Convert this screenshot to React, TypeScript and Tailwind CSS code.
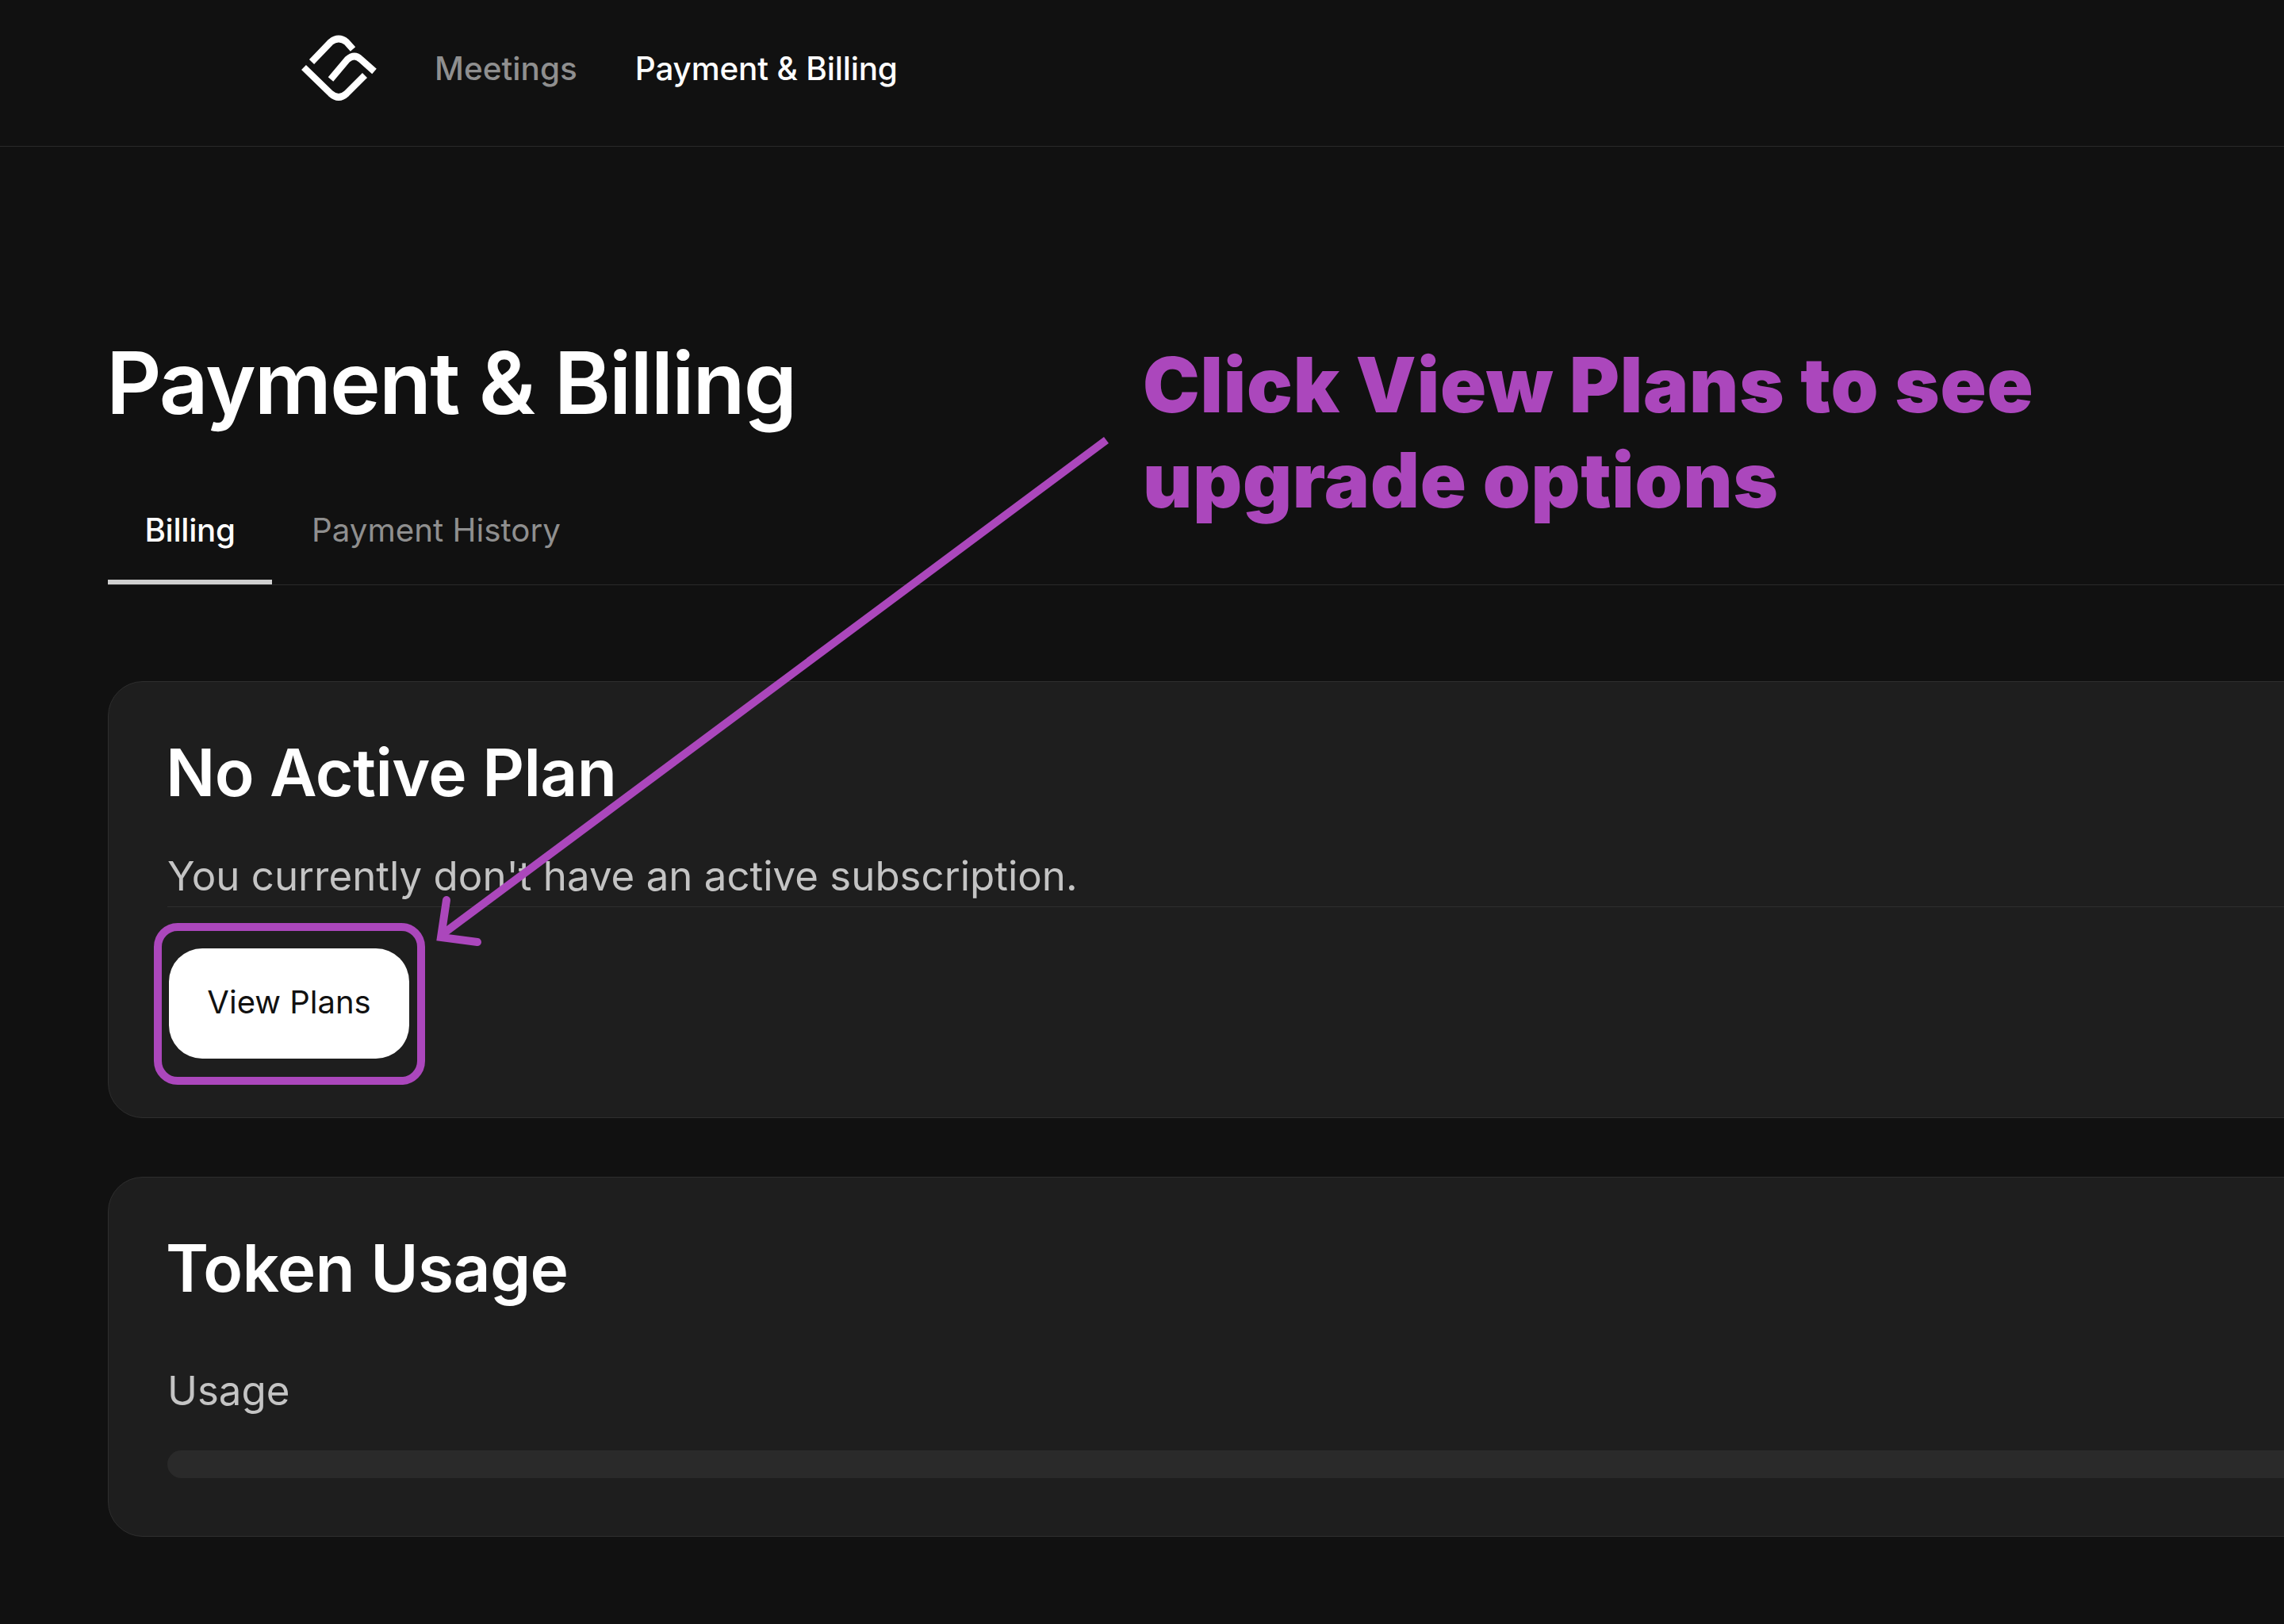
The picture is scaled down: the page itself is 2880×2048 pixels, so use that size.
const INTER = "font-['Inter',sans-serif]";

function Logo() {
  return (
    <svg viewBox="0 0 130 110" className="w-[130px] h-[110px]" fill="none" stroke="#ffffff" strokeWidth="8.5">
      <path d="M23 55 L57 88 Q67 97 77 88 L100 65" />
      <path d="M33 48 L57 23 Q67 15 77 23 L85 32" />
      <path d="M57 70 L78 45 Q87 37 95 45 L112 60" />
    </svg>
  );
}

function Annotations() {
  return (
    <>
      <div className="absolute left-[1441px] top-[425px] text-[96px] leading-[120px] font-black tracking-[0.8px] text-[#ab47bc] whitespace-nowrap">
        Click View Plans to see
        <br />
        upgrade options
      </div>
      <svg className="absolute left-0 top-0 w-[2880px] h-[2048px] pointer-events-none" viewBox="0 0 2880 2048" fill="none" stroke="#ab47bc" strokeWidth="10">
        <path d="M1395 555 L558 1178" />
        <path d="M563 1135 L556 1182 L602 1188" strokeLinecap="round" />
      </svg>
      <div className="absolute left-[194px] top-[1164px] w-[342px] h-[204px] border-[10px] border-[#ab47bc] rounded-[30px]" />
    </>
  );
}

export default function App() {
  return (
    <div className={`relative w-[2880px] h-[2048px] overflow-hidden bg-[#111111] text-white ${INTER}`}>
      <header className="h-[185px] border-b border-[#2a2a2a] pl-[360px] flex items-center pb-[14px]">
        <Logo />
        <nav className="ml-[58px] mt-[3px] flex items-center gap-[73px] text-[40.5px] leading-[60px] font-medium">
          <span className="text-[#8f8f8f]">Meetings</span>
          <span className="text-white tracking-[-0.2px]">Payment &amp; Billing</span>
        </nav>
      </header>

      <main className="w-[3200px] pl-[136px] pt-[238px]">
        <h1 className="text-[108px] leading-[120px] font-semibold tracking-[-1.9px] -ml-[2px]">Payment &amp; Billing</h1>

        <div className="mt-[94px] flex border-b border-[#2a2a2a] text-[40.3px] leading-[60px]">
          <div className="w-[207px] text-center pt-[2px] pb-[32px] border-b-[6px] border-[#d0d0d0] font-medium tracking-[-0.3px]">Billing</div>
          <div className="px-[50px] pt-[2px] pb-[32px] border-b-[6px] border-transparent text-[#8f8f8f]">Payment History</div>
        </div>

        <section className="mt-[121px] border border-[#2e2e2e] bg-[#1e1e1e] rounded-[44px] pl-[74px] pt-[65px] pb-[74px]">
          <h2 className="text-[82px] leading-[100px] font-semibold tracking-[-0.6px] -ml-[2px]">No Active Plan</h2>
          <p className="mt-[45px] text-[51px] leading-[70px] text-[#c4c4c4]">You currently don&apos;t have an active subscription.</p>
          <div className="mt-[3px] h-px bg-[#2e2e2e]" />
          <button className="mt-[52px] ml-[2px] w-[303px] h-[139px] pb-[3px] rounded-[42px] bg-white text-[#111111] text-[40px]">View Plans</button>
        </section>

        <section className="mt-[74px] border border-[#2e2e2e] bg-[#1e1e1e] rounded-[44px] pl-[74px] pt-[65px] pb-[73px]">
          <h2 className="text-[82px] leading-[100px] font-semibold tracking-[-0.6px] -ml-[2px]">Token Usage</h2>
          <p className="mt-[69px] text-[51px] leading-[70px] text-[#c4c4c4]">Usage</p>
          <div className="mt-[40px] h-[35px] rounded-full bg-[#2a2a2a]" />
        </section>
      </main>

      <Annotations />
    </div>
  );
}
